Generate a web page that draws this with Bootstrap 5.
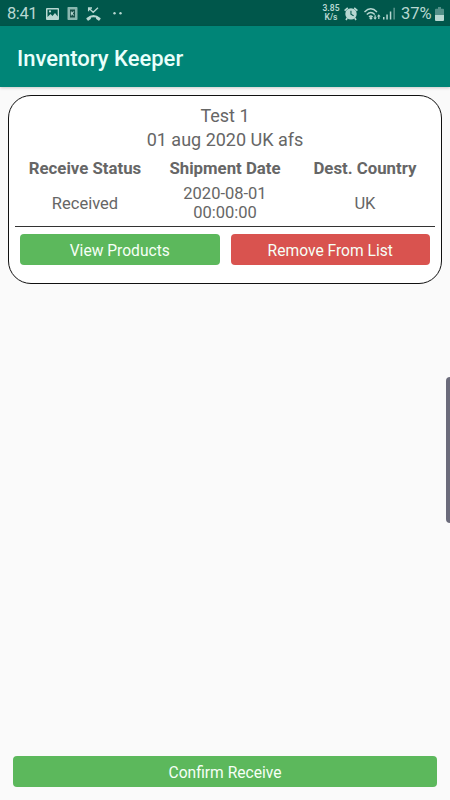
<!DOCTYPE html>
<html lang="en">
<head>
<meta charset="utf-8">
<meta name="viewport" content="width=device-width, initial-scale=1">
<title>Inventory Keeper</title>
<link href="https://cdn.jsdelivr.net/npm/bootstrap@5.3.0/dist/css/bootstrap.min.css" rel="stylesheet">
<style>
body { font-family: Roboto, "Liberation Sans", sans-serif; background: #fafafa; color: #666; height: 800px; overflow: hidden; line-height: 1.2; }
svg { display: block; flex: none; fill: currentColor; }
.status-strip { height: 26px; background: #00574b; color: #b8d8d2; flex: none; padding: 1px 6px 0 7px; font-size: 17px; }
.clock { width: 39px; font-size: 16.5px; letter-spacing: -.4px; }
.net-speed { font-size: 8.5px; font-weight: 600; width: 20px; margin-right: 3px; padding-bottom: 1px; }
.net-speed span { display: block; height: 9px; line-height: 9px; }
.dots { margin-left: -4px; }
.wifi { margin-left: 6px; }
.battery-text { width: 31px; margin-left: 5px; margin-right: 3px; font-size: 16.5px; white-space: nowrap; }
.app-title { height: 61px; background: #008577; color: #eafffb; flex: none; padding: 5px 17px 0; font-size: 22px; font-weight: 500; box-shadow: 0 1px 3px rgba(0,0,0,.2); }
.shipment { margin: 8px 8px 0 8px; height: 189px; border: 1px solid #111; border-radius: 23px; padding: 8px 6px 0; background: #fff; flex: none; }
.ship-line { font-size: 18px; line-height: 24px; }
.ship-head { font-size: 16.8px; line-height: 24px; font-weight: 700; margin-top: 4px; margin-bottom: 1px; }
.ship-data { font-size: 16.5px; line-height: 19px; height: 46px; padding-bottom: 1px; border-bottom: 1px solid #333; }
.ship-actions { gap: 11px; padding: 7px 5px 0; }
.action { height: 31px; padding: 2px 0 0; border: 0; border-radius: 4px; font-size: 15.6px; line-height: 31px; color: #f6fff6; }
.action-go, .action-go:hover { background: #5cb85c; }
.action-drop, .action-drop:hover { background: #d9534f; }
.confirm-area { padding: 0 13px 13px; }
.edge-handle { right: 0; top: 377px; width: 4px; height: 146px; background: #6b6b7b; border-radius: 4px 0 0 4px; }
</style>
</head>
<body class="d-flex flex-column position-relative">
<div class="status-strip d-flex align-items-center">
  <span class="clock">8:41</span>
  <svg width="13" height="12" viewBox="0 0 13 12"><path fill-rule="evenodd" d="M1 0h11q1 0 1 1v10q0 1-1 1H1q-1 0-1-1V1q0-1 1-1zM1.5 1.5V9l3-3 2 2L9 5l2.7 3.5v-7zM4 2.3a1.1 1.1 0 1 1 0 2.2 1.1 1.1 0 0 1 0-2.2z"/></svg>
  <svg class="ms-2" width="11" height="13" viewBox="0 0 11 13"><rect x=".5" width="10" height="13" rx=".7" opacity=".75"/><path fill="#174f47" d="M3 2.5h5v8H3z"/><path d="M3.8 4.5h1v1.3L6.2 4.5h1.2L5.8 6.4l1.6 2.1H6.2L4.8 7v1.5h-1z"/></svg>
  <svg class="ms-2 me-3" width="15" height="14" viewBox="0 0 15 14"><path d="M.6 11Q7.5 5 14.4 11q.5.5.1 1l-1.2 1.4q-.4.4-.9.1L10.2 12l-.3-1.5q-2.4-.7-4.8 0L4.8 12l-2.2 1.5q-.5.3-.9-.1L.5 12q-.4-.5.1-1z"/><path fill="none" stroke="currentColor" stroke-width="1.3" d="M2.6 4.3V1H6M2.9 1.3l4.3 4L12 .7"/></svg>
  <svg class="dots" width="11" height="4" viewBox="0 0 11 4"><circle cx="1.5" cy="1.2" r="1.2"/><circle cx="7.5" cy="1.2" r="1.2"/></svg>
  <div class="net-speed text-center ms-auto"><span>3.85</span><span>K/s</span></div>
  <svg width="14" height="14" viewBox="0 0 14 14"><path fill-rule="evenodd" d="M7 1.2a5.7 5.7 0 1 1 0 11.4A5.7 5.7 0 0 1 7 1.2zM6.4 3.7v3.9l2.9 1.7.6-1-2.4-1.4V3.7z"/><path fill="none" stroke="currentColor" stroke-width="1.6" d="M.6 3.6 3.8.8M13.4 3.6 10.2.8M3.2 11l-1.2 2M10.8 11l1.2 2"/></svg>
  <svg class="wifi" width="19" height="14" viewBox="0 0 19 14"><g fill="none" stroke="currentColor" stroke-width="1.4"><path d="M.5 5Q6.8-1.4 13 5M2.8 7.6q4-4 8 0M5 10q1.8-1.8 3.6 0"/></g><circle cx="6.9" cy="11.2" r="1.3"/><path d="m11.1 12.7-1.8-2.2h1.2V8.3h1.2v2.2h1.2zM14.8 7.3l1.8 2.2h-1.2v2.6h-1.2V9.5H13z"/></svg>
  <svg width="13" height="13" viewBox="0 0 13 13"><path d="M0 10h1.5v2.5H0zM3.3 7.5h1.5v5H3.3z"/><path d="M6.8 4.5h1.5v8H6.8z"/><path opacity=".5" d="M10.4.7h1.5v11.8h-1.5z"/></svg>
  <span class="battery-text">37%</span>
  <svg width="9" height="14" viewBox="0 0 9 14"><path opacity=".45" d="M3 0h3v1.7h2q1 0 1 1V8H0V2.7q0-1 1-1h2z"/><path d="M0 8h9v5q0 1-1 1H1q-1 0-1-1z"/></svg>
</div>
<header class="app-title d-flex align-items-center">Inventory Keeper</header>
<main class="shipment text-center">
  <div class="ship-line">Test 1</div>
  <div class="ship-line">01 aug 2020 UK afs</div>
  <div class="ship-head row g-0"><div class="col-4">Receive Status</div><div class="col-4">Shipment Date</div><div class="col-4">Dest. Country</div></div>
  <div class="ship-data row g-0 align-items-center"><div class="col-4">Received</div><div class="col-4">2020-08-01<br>00:00:00</div><div class="col-4">UK</div></div>
  <div class="ship-actions d-flex">
    <button class="btn action action-go flex-fill w-50">View Products</button>
    <button class="btn action action-drop flex-fill w-50">Remove From List</button>
  </div>
</main>
<footer class="confirm-area mt-auto"><button class="btn action action-go w-100 d-block">Confirm Receive</button></footer>
<div class="edge-handle position-absolute"></div>
<script src="https://cdn.jsdelivr.net/npm/bootstrap@5.3.0/dist/js/bootstrap.bundle.min.js"></script>
</body>
</html>
